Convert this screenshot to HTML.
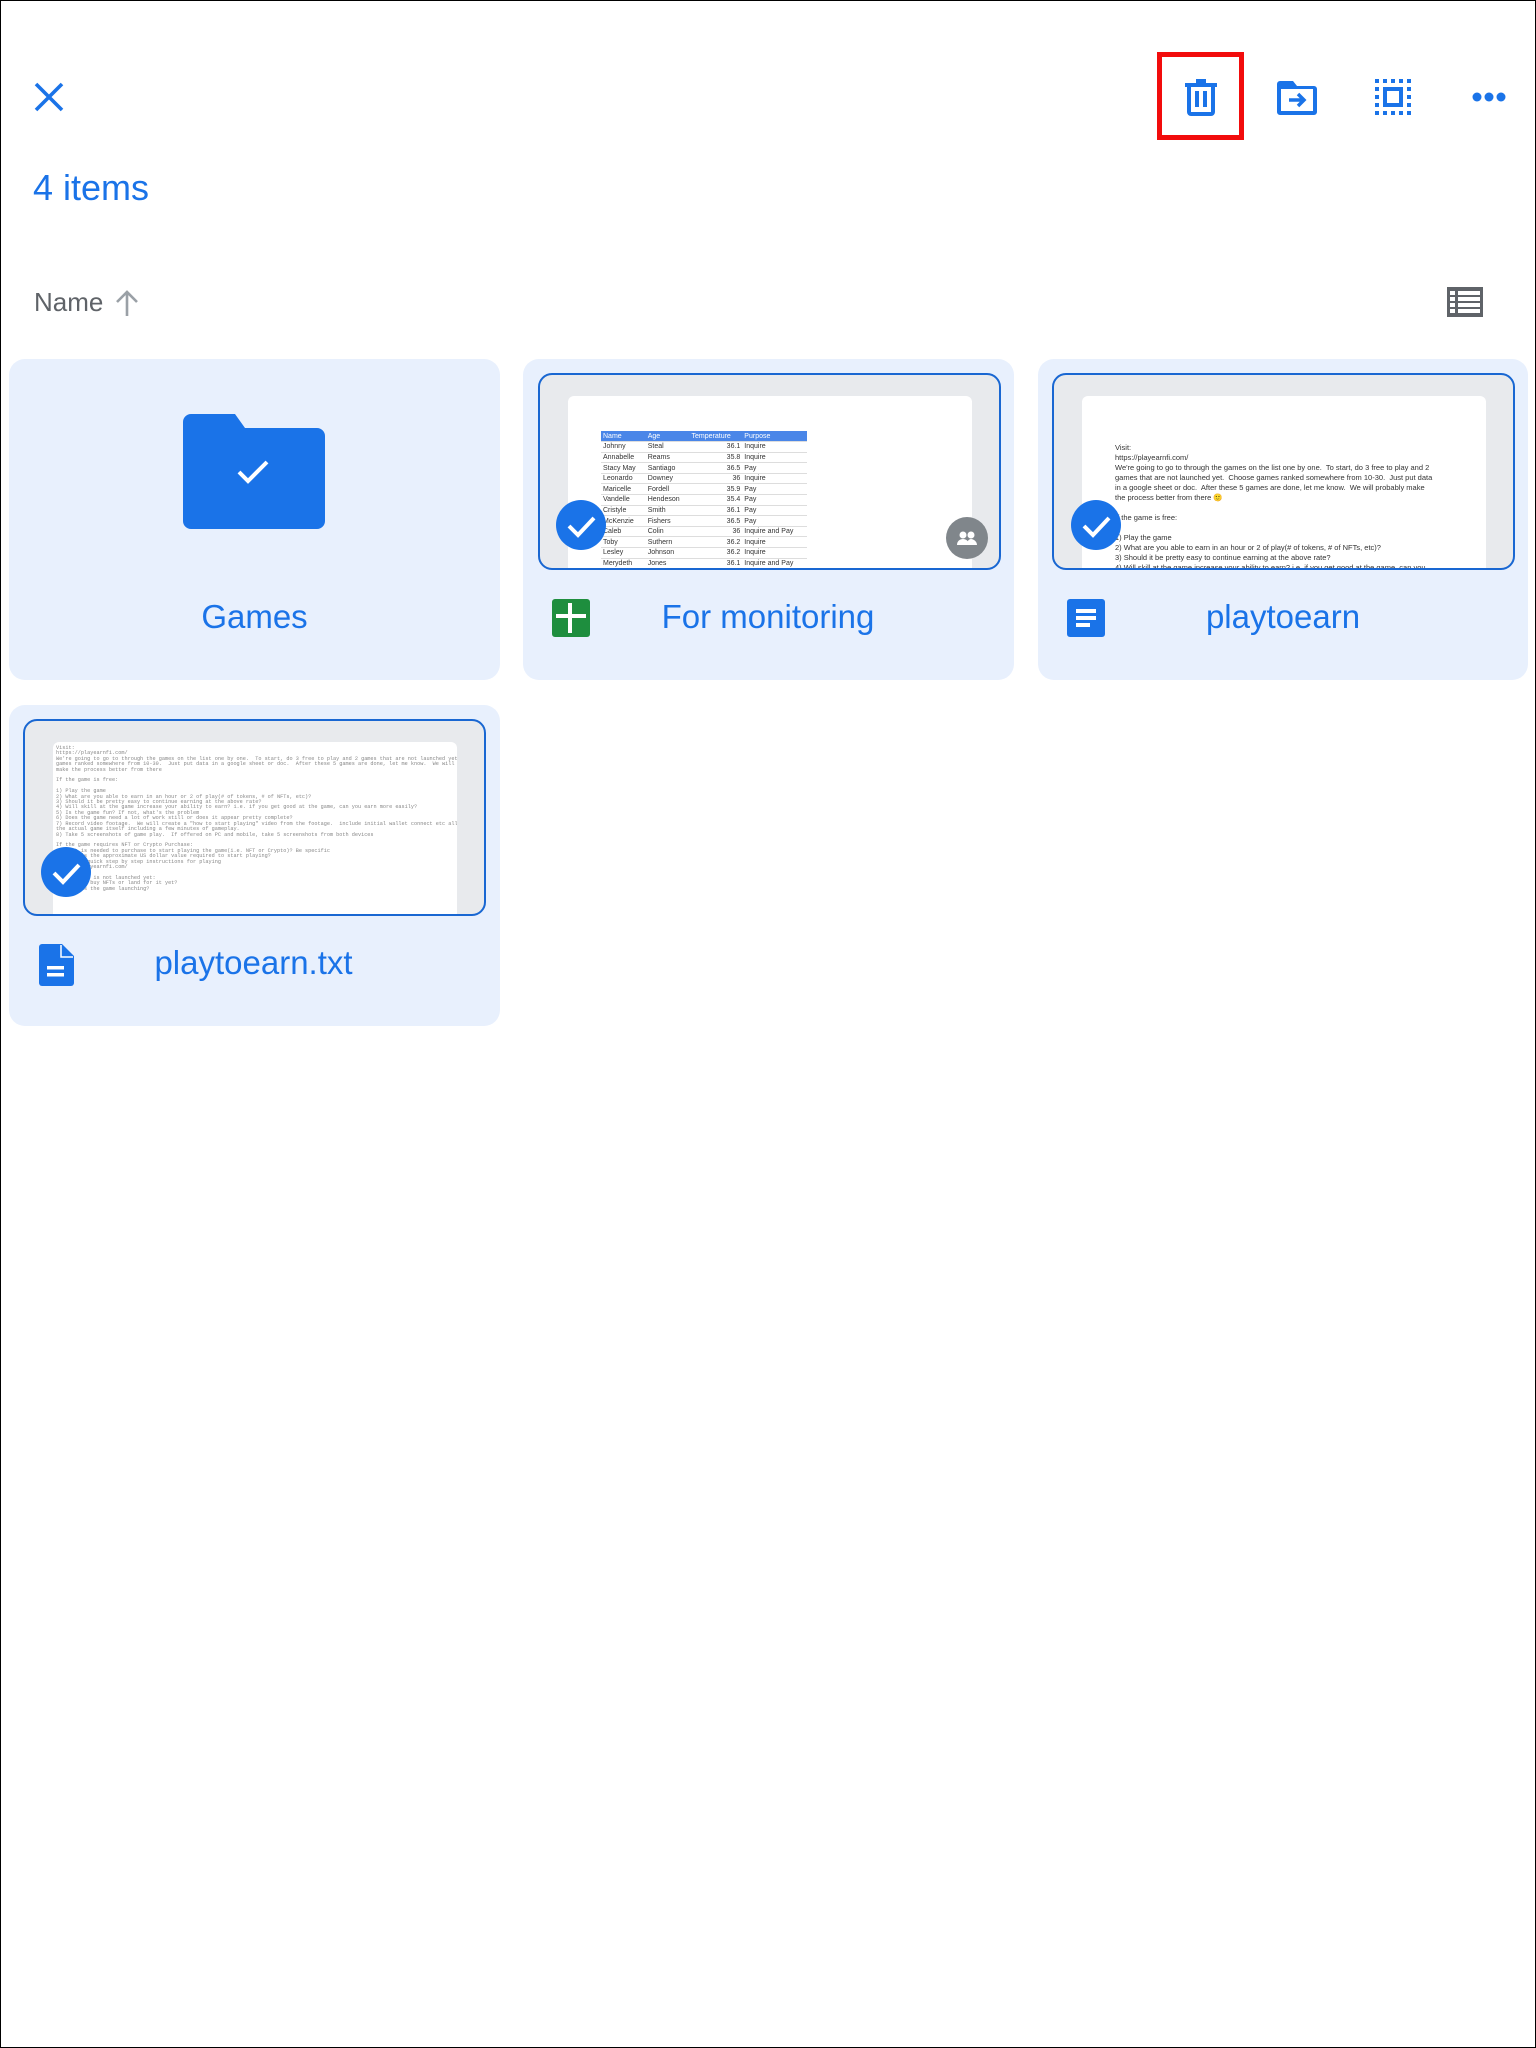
<!DOCTYPE html>
<html><head><meta charset="utf-8"><style>
*{margin:0;padding:0;box-sizing:border-box}
body{width:1536px;height:2048px;background:#fff;font-family:"Liberation Sans",sans-serif;position:relative;overflow:hidden;border:1px solid #000}
.a{position:absolute}
.card{position:absolute;background:#e8f0fd;border-radius:16px}
.thumb{position:absolute;border:2px solid #1967d2;border-radius:14px;background:#e8eaed;overflow:hidden}
.page{position:absolute;background:#fff;border-radius:6px 6px 0 0;overflow:hidden}
.lbl{position:absolute;color:#1a73e8;font-size:33px;text-align:center}
.chk{position:absolute;width:50px;height:50px;border-radius:50%;background:#1a73e8}
table{border-collapse:collapse;font-size:7px;color:#333}
td{border-bottom:1px solid #ddd;height:10.6px;padding:0 2px}
.txt{font-size:7.5px;line-height:10px;color:#333;white-space:pre}
.mono{font-family:"Liberation Mono",monospace;font-size:5.2px;line-height:5.4px;color:#888;white-space:pre}
</style></head><body>
<svg class="a" style="left:33px;top:81px" width="30" height="30" viewBox="0 0 30 30"><path d="M2 2L28 28M28 2L2 28" stroke="#1a73e8" stroke-width="3.6"/></svg>
<div class="a" style="left:1156px;top:51px;width:87px;height:88px;border:5px solid #f20c0c"></div>
<svg class="a" style="left:1184px;top:77px" width="32" height="38" viewBox="0 0 32 38"><path d="M0 5h32v4H0zM11 1h10v4H11z" fill="#1a73e8"/><path d="M4 9v25a2 2 0 0 0 2 2h20a2 2 0 0 0 2-2V9" fill="none" stroke="#1a73e8" stroke-width="4"/><rect x="10" y="13" width="4" height="16" fill="#1a73e8"/><rect x="18" y="13" width="4" height="16" fill="#1a73e8"/></svg>
<svg class="a" style="left:1276px;top:80px" width="40" height="34" viewBox="0 0 40 34"><path d="M3 0h13l4 5h17a3 3 0 0 1 3 3v23a3 3 0 0 1-3 3H3a3 3 0 0 1-3-3V3a3 3 0 0 1 3-3z" fill="#1a73e8"/><rect x="4" y="8" width="32" height="22" fill="#fff"/><path d="M12 19h14M21 13l6 6-6 6" stroke="#1a73e8" stroke-width="3.5" fill="none"/></svg>
<svg class="a" style="left:1374px;top:78px" width="36" height="36" viewBox="0 0 36 36"><g fill="#1a73e8"><rect x="0" y="0" width="4" height="4"/><rect x="8" y="0" width="4" height="4"/><rect x="16" y="0" width="4" height="4"/><rect x="24" y="0" width="4" height="4"/><rect x="32" y="0" width="4" height="4"/><rect x="0" y="32" width="4" height="4"/><rect x="8" y="32" width="4" height="4"/><rect x="16" y="32" width="4" height="4"/><rect x="24" y="32" width="4" height="4"/><rect x="32" y="32" width="4" height="4"/><rect x="0" y="8" width="4" height="4"/><rect x="0" y="16" width="4" height="4"/><rect x="0" y="24" width="4" height="4"/><rect x="32" y="8" width="4" height="4"/><rect x="32" y="16" width="4" height="4"/><rect x="32" y="24" width="4" height="4"/></g><rect x="10" y="10" width="16" height="16" fill="none" stroke="#1a73e8" stroke-width="4"/></svg>
<svg class="a" style="left:1471px;top:89px" width="34" height="14" viewBox="0 0 34 14"><circle cx="5" cy="7" r="4.5" fill="#1a73e8"/><circle cx="17" cy="7" r="4.5" fill="#1a73e8"/><circle cx="29" cy="7" r="4.5" fill="#1a73e8"/></svg>

<div class="a" style="left:32px;top:166px;font-size:36px;color:#1a73e8">4 items</div>
<div class="a" style="left:33px;top:286px;font-size:26px;color:#5f6368">Name</div>
<svg class="a" style="left:114px;top:288px" width="24" height="28" viewBox="0 0 24 28"><path d="M12 27V3M2 13L12 3l10 10" stroke="#9aa0a6" stroke-width="2.6" fill="none"/></svg>
<svg class="a" style="left:1446px;top:286px" width="36" height="30" viewBox="0 0 36 30"><rect width="36" height="30" fill="#5f6368"/><g fill="#fff"><rect x="3" y="4" width="5" height="4"/><rect x="11" y="4" width="22" height="4"/><rect x="3" y="10" width="5" height="4"/><rect x="11" y="10" width="22" height="4"/><rect x="3" y="16" width="5" height="4"/><rect x="11" y="16" width="22" height="4"/><rect x="3" y="22" width="5" height="4"/><rect x="11" y="22" width="22" height="4"/></g></svg>

<div class="card" style="left:8px;top:358px;width:491px;height:321px"></div>
<svg class="a" style="left:182px;top:413px" width="142" height="115" viewBox="0 0 142 115"><path d="M8 0h44l10 14h72a8 8 0 0 1 8 8v85a8 8 0 0 1-8 8H8a8 8 0 0 1-8-8V8a8 8 0 0 1 8-8z" fill="#1a73e8"/><path d="M56 58l9 9 19-19" stroke="#fff" stroke-width="4" fill="none"/></svg>
<div class="lbl" style="left:8px;top:597px;width:491px">Games</div>

<div class="card" style="left:522px;top:358px;width:491px;height:321px"></div>
<div class="thumb" style="left:537px;top:372px;width:463px;height:197px">
 <div class="page" style="left:28px;top:21px;width:404px;height:180px">
  <table style="position:absolute;left:33px;top:35px;width:206px">
   <tr style="background:#4a86e8;color:#fff"><td>Name</td><td>Age</td><td>Temperature</td><td>Purpose</td></tr>
   <tr><td>Johnny</td><td>Steal</td><td align="right">36.1</td><td>Inquire</td></tr>
   <tr><td>Annabelle</td><td>Reams</td><td align="right">35.8</td><td>Inquire</td></tr>
   <tr><td>Stacy May</td><td>Santiago</td><td align="right">36.5</td><td>Pay</td></tr>
   <tr><td>Leonardo</td><td>Downey</td><td align="right">36</td><td>Inquire</td></tr>
   <tr><td>Maricelle</td><td>Fordell</td><td align="right">35.9</td><td>Pay</td></tr>
   <tr><td>Vandelle</td><td>Hendeson</td><td align="right">35.4</td><td>Pay</td></tr>
   <tr><td>Cristyle</td><td>Smith</td><td align="right">36.1</td><td>Pay</td></tr>
   <tr><td>McKenzie</td><td>Fishers</td><td align="right">36.5</td><td>Pay</td></tr>
   <tr><td>Caleb</td><td>Colin</td><td align="right">36</td><td>Inquire and Pay</td></tr>
   <tr><td>Toby</td><td>Suthern</td><td align="right">36.2</td><td>Inquire</td></tr>
   <tr><td>Lesley</td><td>Johnson</td><td align="right">36.2</td><td>Inquire</td></tr>
   <tr><td>Merydeth</td><td>Jones</td><td align="right">36.1</td><td>Inquire and Pay</td></tr>
  </table>
 </div>
</div>
<div class="chk" style="left:555px;top:499px"><svg width="50" height="50"><path d="M13 26l9 9 16-17" stroke="#fff" stroke-width="4" fill="none"/></svg></div>
<div class="a" style="left:945px;top:516px;width:42px;height:42px;border-radius:50%;background:#80868b"><svg width="42" height="42"><circle cx="17" cy="18" r="3.5" fill="#fff"/><circle cx="25" cy="18" r="3.5" fill="#fff"/><path d="M11 28c0-4 3-6 6-6s6 2 6 6zM21 28c0-4 2-6 4-6s6 2 6 6z" fill="#fff"/></svg></div>
<svg class="a" style="left:551px;top:598px" width="38" height="38" viewBox="0 0 38 38"><rect width="38" height="38" rx="3" fill="#1e8e3e"/><rect x="4" y="15" width="30" height="4" fill="#fff"/><rect x="16" y="4" width="4" height="30" fill="#fff"/></svg>
<div class="lbl" style="left:580px;top:597px;width:374px">For monitoring</div>

<div class="card" style="left:1037px;top:358px;width:490px;height:321px"></div>
<div class="thumb" style="left:1051px;top:372px;width:463px;height:197px">
 <div class="page" style="left:28px;top:21px;width:404px;height:180px">
  <div class="a txt" style="left:33px;top:47px">Visit:
https://playearnfi.com/
We're going to go to through the games on the list one by one.  To start, do 3 free to play and 2
games that are not launched yet.  Choose games ranked somewhere from 10-30.  Just put data
in a google sheet or doc.  After these 5 games are done, let me know.  We will probably make
the process better from there 🙂

If the game is free:

1) Play the game
2) What are you able to earn in an hour or 2 of play(# of tokens, # of NFTs, etc)?
3) Should it be pretty easy to continue earning at the above rate?
4) Will skill at the game increase your ability to earn? i.e. if you get good at the game, can you</div>
 </div>
</div>
<div class="chk" style="left:1070px;top:499px"><svg width="50" height="50"><path d="M13 26l9 9 16-17" stroke="#fff" stroke-width="4" fill="none"/></svg></div>
<svg class="a" style="left:1066px;top:598px" width="38" height="38" viewBox="0 0 38 38"><rect width="38" height="38" rx="3" fill="#1a73e8"/><rect x="9" y="10" width="20" height="4" fill="#fff"/><rect x="9" y="17" width="20" height="4" fill="#fff"/><rect x="9" y="24" width="14" height="4" fill="#fff"/></svg>
<div class="lbl" style="left:1095px;top:597px;width:374px">playtoearn</div>

<div class="card" style="left:8px;top:704px;width:491px;height:321px"></div>
<div class="thumb" style="left:22px;top:718px;width:463px;height:197px">
 <div class="page" style="left:28px;top:21px;width:404px;height:180px">
  <div class="a mono" style="left:3px;top:4px">Visit:
https://playearnfi.com/
We're going to go to through the games on the list one by one.  To start, do 3 free to play and 2 games that are not launched yet.  Choose
games ranked somewhere from 10-30.  Just put data in a google sheet or doc.  After these 5 games are done, let me know.  We will probably
make the process better from there

If the game is free:

1) Play the game
2) What are you able to earn in an hour or 2 of play(# of tokens, # of NFTs, etc)?
3) Should it be pretty easy to continue earning at the above rate?
4) Will skill at the game increase your ability to earn? i.e. if you get good at the game, can you earn more easily?
5) Is the game fun? If not, what's the problem
6) Does the game need a lot of work still or does it appear pretty complete?
7) Record video footage.  We will create a "how to start playing" video from the footage.  include initial wallet connect etc all the way to
the actual game itself including a few minutes of gameplay.
8) Take 5 screenshots of game play.  If offered on PC and mobile, take 5 screenshots from both devices

If the game requires NFT or Crypto Purchase:
1) What is needed to purchase to start playing the game(i.e. NFT or Crypto)? Be specific
2) What is the approximate US dollar value required to start playing?
3) Create quick step by step instructions for playing
https://playearnfi.com/

If the game is not launched yet:
1) Can you buy NFTs or land for it yet?
2) When is the game launching?</div>
 </div>
</div>
<div class="chk" style="left:40px;top:846px"><svg width="50" height="50"><path d="M13 26l9 9 16-17" stroke="#fff" stroke-width="4" fill="none"/></svg></div>
<svg class="a" style="left:38px;top:943px" width="35" height="42" viewBox="0 0 35 42"><path d="M3 0h20l12 12v27a3 3 0 0 1-3 3H3a3 3 0 0 1-3-3V3a3 3 0 0 1 3-3z" fill="#1a73e8"/><path d="M22 1v12h12" fill="none" stroke="#fff" stroke-width="1.5"/><rect x="8" y="22" width="17" height="3.5" fill="#fff"/><rect x="8" y="29" width="17" height="3.5" fill="#fff"/></svg>
<div class="lbl" style="left:55px;top:943px;width:395px">playtoearn.txt</div>
</body></html>
